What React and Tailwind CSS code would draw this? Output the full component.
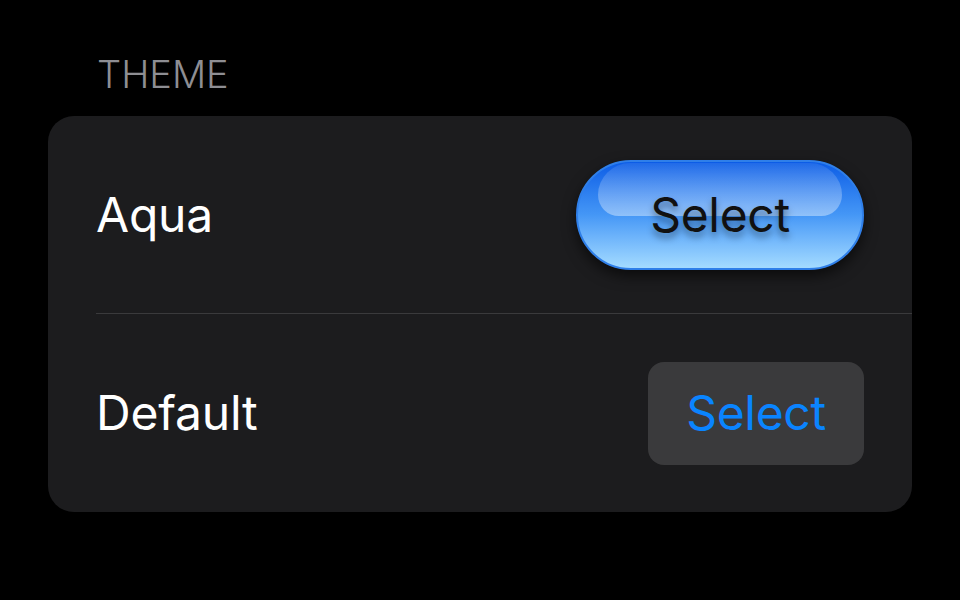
import React from "react";

const font = { fontFamily: "Inter, 'Noto Sans', sans-serif" };

const AquaButton = ({ children }) => (
  <button className="relative w-[288px] h-[110px] rounded-full border-2 border-[#2f7fe9] bg-gradient-to-b from-[#0c5ce6] via-[#4597f6] to-[#a4dbff] shadow-[0_6px_14px_rgba(0,0,0,0.6)] overflow-hidden">
    <span className="absolute left-[20px] right-[20px] top-[1px] h-[53px] rounded-t-[40px] rounded-b-[26px] bg-gradient-to-b from-[rgba(255,255,255,0.08)] to-[rgba(255,255,255,0.4)]" />
    <span className="relative text-[48px] text-[#111] tracking-[-0.3px] [text-shadow:0_5px_7px_rgba(0,0,0,0.4)]">
      {children}
    </span>
  </button>
);

const PlainButton = ({ children }) => (
  <button className="w-[216px] h-[103px] rounded-[16px] bg-[#3a3a3c] text-[48px] text-[#0a84ff] tracking-[-0.3px]">
    {children}
  </button>
);

const Row = ({ label, action }) => (
  <div className="flex items-center justify-between px-[48px] h-[197px] last:h-[198px]">
    <span className="text-[48px] text-white tracking-[-0.2px]">{label}</span>
    {action}
  </div>
);

export default function App() {
  return (
    <div className="w-[960px] h-[600px] bg-black px-[48px] pt-[52px]" style={font}>
      <div className="pl-[49px] text-[38px] font-light text-[#8e8e93] leading-[44px] mb-[20px]">THEME</div>
      <div className="bg-[#1c1c1e] rounded-[26px] overflow-hidden">
        <Row label="Aqua" action={<AquaButton>Select</AquaButton>} />
        <div className="ml-[48px] h-px bg-[#3a3a3c]" />
        <Row label="Default" action={<PlainButton>Select</PlainButton>} />
      </div>
    </div>
  );
}
